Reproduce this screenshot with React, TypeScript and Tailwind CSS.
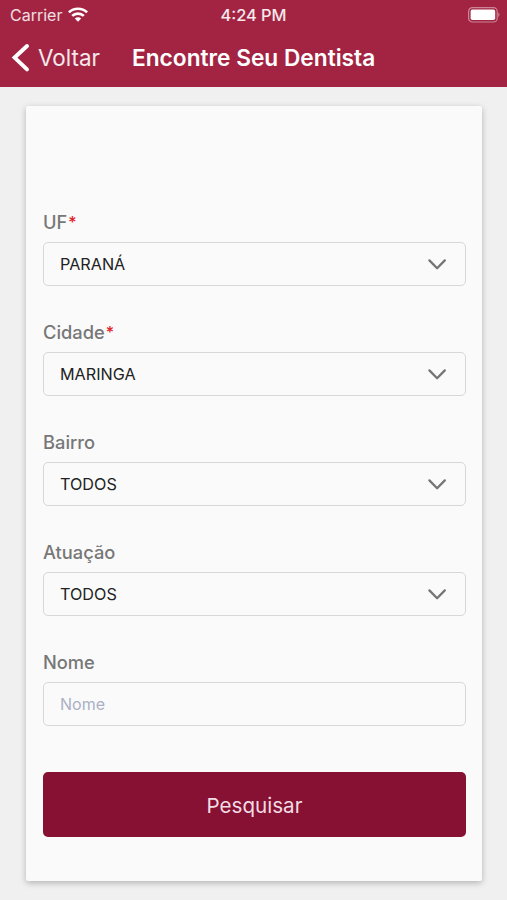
interface FieldProps {
    label: string;
    value?: string;
    placeholder?: string;
    required?: boolean;
}

const WifiIcon = () => (
    <svg className="ml-1.5 h-[15px] w-5" viewBox="0 0 20 15" fill="none" stroke="white" strokeWidth="2.7">
        <path d="M.9 5.4C5.9.5 14.1.5 19.1 5.4" />
        <path d="M4.2 8.9c3.2-3.1 8.4-3.1 11.6 0" />
        <path d="M10 14.8 6.8 11.5c1.8-1.6 4.6-1.6 6.4 0z" fill="white" stroke="none" />
    </svg>
);

const BatteryIcon = () => (
    <svg className="h-4 w-8" viewBox="0 0 32 16" fill="none">
        <rect x="0.6" y="0.6" width="28.6" height="14.4" rx="3.8" stroke="white" strokeOpacity="0.45" strokeWidth="1.2" />
        <rect x="2.6" y="2.6" width="24.6" height="10.4" rx="1.8" fill="white" />
        <path d="M30.4 5.6c1.4.6 1.4 3.8 0 4.4z" fill="white" fillOpacity="0.5" />
    </svg>
);

const Chevron = () => (
    <svg className="h-3 w-5" viewBox="0 0 20 12" fill="none" stroke="#757575" strokeWidth="2.3">
        <path d="M2.4 2.4l7.7 7.8 7.7-7.8" strokeLinecap="round" strokeLinejoin="round" />
    </svg>
);

const Field = ({ label, value, placeholder, required }: FieldProps) => (
    <div className="h-[110px]">
        <div className="flex h-6 items-center text-[18.3px] font-medium text-[#777777]">
            <span>{label}</span>
            {required && <span className="ml-px pb-0.5 text-[16px] leading-none text-[#df2029]">*</span>}
        </div>
        <div className="mt-[7px] flex h-11 items-center justify-between rounded-[5px] border-[1.5px] border-[#d7d7d7] pr-[18px] pl-4">
            {value ? (
                <>
                    <span className="text-[16.2px] text-[#222222]">{value}</span>
                    <Chevron />
                </>
            ) : (
                <span className="text-[16px] text-[#aab0c5]">{placeholder}</span>
            )}
        </div>
    </div>
);

export default function App() {
    return (
        <div className="flex h-[900px] w-[507px] flex-col overflow-hidden bg-[#f0f0f0] font-['Inter','Liberation_Sans',sans-serif]">
            <header className="h-[87px] shrink-0 bg-[#a22442] text-white">
                <div className="grid h-[29px] grid-cols-3 items-center pr-[7px] pl-[10px] text-[16px]">
                    <div className="flex items-center text-white/85">
                        <span>Carrier</span>
                        <WifiIcon />
                    </div>
                    <span className="pt-px pr-[3px] text-center text-[16.4px] font-medium text-white/90">4:24 PM</span>
                    <div className="flex justify-end">
                        <BatteryIcon />
                    </div>
                </div>
                <div className="flex h-[58px] items-center pl-[11px]">
                    <svg className="h-[30px] w-[19px]" viewBox="0 0 19 30" fill="none" stroke="white" strokeWidth="4">
                        <path d="M16 3 3.6 14.6 16 26.4" strokeLinecap="round" />
                    </svg>
                    <span className="ml-2 w-[94px] text-[22.4px] text-white/90">Voltar</span>
                    <h1 className="text-[22.7px] font-semibold whitespace-nowrap">Encontre Seu Dentista</h1>
                </div>
            </header>
            <main className="mx-[26px] mt-[19px] h-[775px] w-[456px] rounded-[2px] bg-[#fafafa] pt-[105px] pr-4 pl-[17px] shadow-[0_2px_6px_rgba(0,0,0,0.25)]">
                <Field label="UF" value="PARANÁ" required />
                <Field label="Cidade" value="MARINGA" required />
                <Field label="Bairro" value="TODOS" />
                <Field label="Atuação" value="TODOS" />
                <Field label="Nome" placeholder="Nome" />
                <button className="mt-[11px] h-[65px] w-full rounded-[5px] bg-[#861133] pt-[3px] text-[20.6px] text-[#f3dce3]">
                    Pesquisar
                </button>
            </main>
        </div>
    );
}
